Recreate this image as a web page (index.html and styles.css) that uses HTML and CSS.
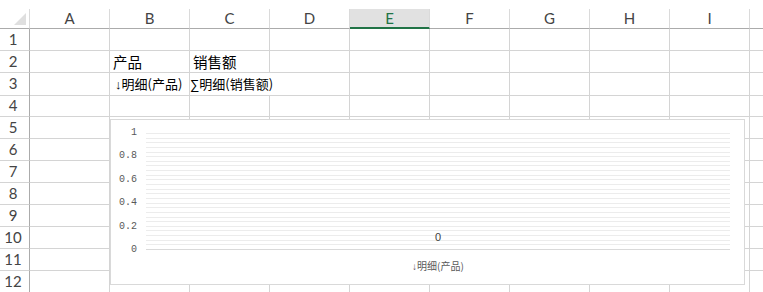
FILE: index.html
```html
<!DOCTYPE html>
<html lang="zh-CN">
<head>
  <meta charset="UTF-8">
  <title>Sheet1</title>
  <link rel="stylesheet" href="styles.css">
</head>
<body>
  <div class="top-gap"></div>

  <!-- Worksheet grid -->
  <div class="sheet">
    <div class="row head">
      <div class="corner"><span class="tri"></span></div>
      <div class="col-h">A</div>
      <div class="col-h">B</div>
      <div class="col-h">C</div>
      <div class="col-h">D</div>
      <div class="col-h sel">E</div>
      <div class="col-h">F</div>
      <div class="col-h">G</div>
      <div class="col-h">H</div>
      <div class="col-h">I</div>
      <div class="col-h"></div>
    </div>

    <div class="row"><div class="row-h">1</div><div class="cell"></div><div class="cell"></div><div class="cell"></div><div class="cell"></div><div class="cell"></div><div class="cell"></div><div class="cell"></div><div class="cell"></div><div class="cell"></div><div class="cell"></div></div>
    <div class="row"><div class="row-h">2</div><div class="cell"></div><div class="cell">产品</div><div class="cell">销售额</div><div class="cell"></div><div class="cell"></div><div class="cell"></div><div class="cell"></div><div class="cell"></div><div class="cell"></div><div class="cell"></div></div>
    <div class="row"><div class="row-h">3</div><div class="cell"></div><div class="cell small"><span class="sym">↓</span>明细(产品)</div><div class="cell small spill"><span class="sym">∑</span>明细(销售额)</div><div class="cell"></div><div class="cell"></div><div class="cell"></div><div class="cell"></div><div class="cell"></div><div class="cell"></div><div class="cell"></div></div>
    <div class="row"><div class="row-h">4</div><div class="cell"></div><div class="cell"></div><div class="cell"></div><div class="cell"></div><div class="cell"></div><div class="cell"></div><div class="cell"></div><div class="cell"></div><div class="cell"></div><div class="cell"></div></div>
    <div class="row"><div class="row-h">5</div><div class="cell"></div><div class="cell"></div><div class="cell"></div><div class="cell"></div><div class="cell"></div><div class="cell"></div><div class="cell"></div><div class="cell"></div><div class="cell"></div><div class="cell"></div></div>
    <div class="row"><div class="row-h">6</div><div class="cell"></div><div class="cell"></div><div class="cell"></div><div class="cell"></div><div class="cell"></div><div class="cell"></div><div class="cell"></div><div class="cell"></div><div class="cell"></div><div class="cell"></div></div>
    <div class="row"><div class="row-h">7</div><div class="cell"></div><div class="cell"></div><div class="cell"></div><div class="cell"></div><div class="cell"></div><div class="cell"></div><div class="cell"></div><div class="cell"></div><div class="cell"></div><div class="cell"></div></div>
    <div class="row"><div class="row-h">8</div><div class="cell"></div><div class="cell"></div><div class="cell"></div><div class="cell"></div><div class="cell"></div><div class="cell"></div><div class="cell"></div><div class="cell"></div><div class="cell"></div><div class="cell"></div></div>
    <div class="row"><div class="row-h">9</div><div class="cell"></div><div class="cell"></div><div class="cell"></div><div class="cell"></div><div class="cell"></div><div class="cell"></div><div class="cell"></div><div class="cell"></div><div class="cell"></div><div class="cell"></div></div>
    <div class="row"><div class="row-h">10</div><div class="cell"></div><div class="cell"></div><div class="cell"></div><div class="cell"></div><div class="cell"></div><div class="cell"></div><div class="cell"></div><div class="cell"></div><div class="cell"></div><div class="cell"></div></div>
    <div class="row"><div class="row-h">11</div><div class="cell"></div><div class="cell"></div><div class="cell"></div><div class="cell"></div><div class="cell"></div><div class="cell"></div><div class="cell"></div><div class="cell"></div><div class="cell"></div><div class="cell"></div></div>
    <div class="row"><div class="row-h">12</div><div class="cell"></div><div class="cell"></div><div class="cell"></div><div class="cell"></div><div class="cell"></div><div class="cell"></div><div class="cell"></div><div class="cell"></div><div class="cell"></div><div class="cell"></div></div>

    <!-- Embedded chart floating over the cells -->
    <div class="chart">
      <div class="axis-y">
        <span>1</span>
        <span>0.8</span>
        <span>0.6</span>
        <span>0.4</span>
        <span>0.2</span>
        <span>0</span>
      </div>
      <div class="plot-wrap">
        <div class="plot">
          <div class="gl"></div><div class="gl"></div><div class="gl"></div><div class="gl"></div><div class="gl"></div>
          <div class="gl"></div><div class="gl"></div><div class="gl"></div><div class="gl"></div><div class="gl"></div>
          <div class="gl"></div><div class="gl"></div><div class="gl"></div><div class="gl"></div><div class="gl"></div>
          <div class="gl"></div><div class="gl"></div><div class="gl"></div><div class="gl"></div><div class="gl"></div>
          <div class="gl"></div><div class="gl"></div><div class="gl"></div><div class="gl"></div><div class="gl"></div>
          <span class="data-label">0</span>
        </div>
        <div class="cat-label"><span class="sym">↓</span>明细(产品)</div>
      </div>
    </div>
  </div>
</body>
</html>
```

FILE: styles.css
```css
/* Base */
* { box-sizing: border-box; }
body {
  margin: 0;
  background: #fff;
  overflow: hidden;
  font-family: "Noto Sans CJK SC", sans-serif;
}
.top-gap { height: 9px; }

/* Grid */
.sheet {
  position: relative;
  width: 763px;
  overflow: hidden;
}
.row {
  display: grid;
  grid-template-columns: 30px repeat(10, 80px);
  height: 22px;
}
.row.head { height: 20px; }

.corner {
  display: flex;
  justify-content: flex-end;
  align-items: flex-end;
  padding: 0 3px 3px 0;
  border-right: 1px solid #dadada;
  border-bottom: 1px solid #ababab;
}
.tri {
  width: 0;
  height: 0;
  border-left: 12px solid transparent;
  border-bottom: 12px solid #dfdfdf;
}
.col-h {
  font-family: Lato, "Open Sans", sans-serif;
  font-size: 15px;
  line-height: 19px;
  color: #444;
  text-align: center;
  border-right: 1px solid #dadada;
  border-bottom: 1px solid #ababab;
}
.col-h.sel {
  background: #e1e1e1;
  color: #217346;
  border-bottom: 2px solid #217346;
  line-height: 18px;
}
.row-h {
  font-family: Lato, "Open Sans", sans-serif;
  font-size: 15px;
  line-height: 21px;
  color: #444;
  text-align: center;
  padding-right: 3px;
  border-right: 1px solid #ababab;
  border-bottom: 1px solid #d4d4d4;
}
.cell {
  font-size: 14.5px;
  line-height: 21px;
  color: #000;
  padding-left: 3px;
  white-space: nowrap;
  border-right: 1px solid #d4d4d4;
  border-bottom: 1px solid #d4d4d4;
}
.cell.small {
  font-size: 13px;
  padding-left: 5px;
}
/* text runs into the next cell, so no grid line there */
.cell.spill {
  padding-left: 0;
  border-right-color: transparent;
}
.sym {
  font-family: "Liberation Sans", sans-serif;
}

/* Chart */
.chart {
  position: absolute;
  left: 110px;
  top: 110px;
  width: 635px;
  height: 166px;
  background: #fff;
  border: 1px solid #d9d9d9;
  display: flex;
  padding-top: 13px;
}
.axis-y {
  width: 26px;
  margin-top: -6px;
  height: 129px;
  display: flex;
  flex-direction: column;
  justify-content: space-between;
  align-items: flex-end;
  font-family: "Liberation Mono", monospace;
  font-size: 10px;
  line-height: 12px;
  color: #595959;
}
.plot-wrap {
  margin-left: 9px;
  width: 584px;
}
.plot {
  position: relative;
  height: 117px;
  display: flex;
  flex-direction: column;
  border-bottom: 1px solid #d9d9d9;
}
.gl {
  flex: 1;
  border-top: 1px solid #ececec;
}
.data-label {
  position: absolute;
  left: 50%;
  bottom: 6px;
  transform: translateX(-50%);
  font-family: "Liberation Sans", sans-serif;
  font-size: 11px;
  line-height: 12px;
  color: #404040;
}
.cat-label {
  margin-top: 10px;
  text-align: center;
  font-size: 10px;
  line-height: 12px;
  color: #595959;
}
```
